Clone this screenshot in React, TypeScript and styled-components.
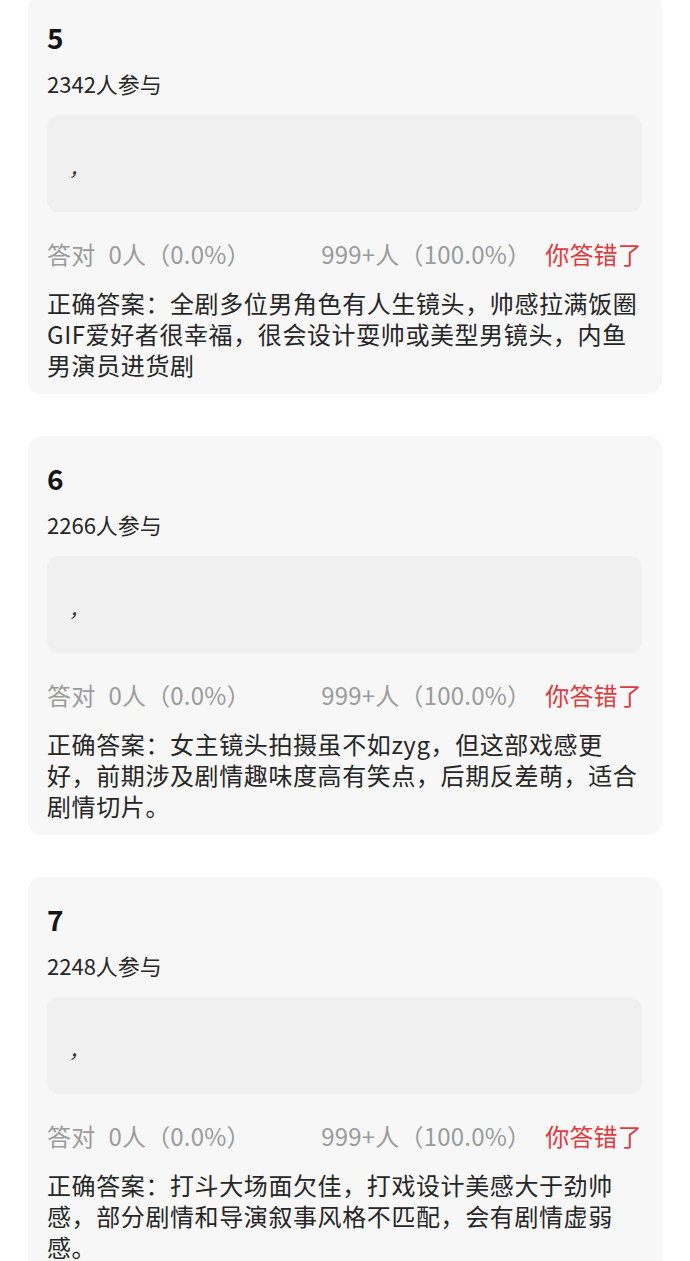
import React from "react";
import styled, { createGlobalStyle } from "styled-components";

const GlobalStyle = createGlobalStyle`
  html, body {
    margin: 0;
    padding: 0;
    background: #ffffff;
  }
  body {
    font-family: "Noto Sans CJK SC", "Noto Sans", sans-serif;
    overflow: hidden;
  }
`;

const Page = styled.div`
  display: flex;
  flex-direction: column;
  gap: 42px;
  padding: 0 28px;
  margin-top: -5px;
  height: 1266px;
  overflow: hidden;
`;

const Card = styled.section`
  flex: none;
  display: flex;
  flex-direction: column;
  background: #f7f7f7;
  border-radius: 14px;
  padding: 26px 20px 14px 19px;
`;

const QNumber = styled.div`
  font-size: 28px;
  font-weight: 700;
  line-height: 32px;
  color: #151515;
`;

const Participants = styled.div`
  margin-top: 16px;
  font-size: 22px;
  line-height: 28px;
  color: #262626;
`;

const OptionBox = styled.div`
  margin-top: 18px;
  height: 97px;
  border-radius: 12px;
  background: #f0f0f0;
  display: flex;
  align-items: center;
  padding-left: 24px;
  font-size: 22px;
  color: #333;
  font-style: italic;
`;

const Stats = styled.div`
  margin-top: 26px;
  display: flex;
  justify-content: space-between;
  align-items: center;
  font-size: 24px;
  line-height: 32px;
  letter-spacing: 0.2px;
  color: #9b9b9b;
  white-space: nowrap;
`;

const StatLeft = styled.div`
  display: flex;
  align-items: center;
  gap: 13px;
`;

const StatRight = styled.div`
  display: flex;
  align-items: center;
  gap: 14px;
`;

const Wrong = styled.span`
  color: #e23b3d;
`;

const Answer = styled.div`
  margin-top: 17px;
  font-size: 24px;
  line-height: 31px;
  letter-spacing: 0.6px;
  color: #262626;
`;

const Line = styled.span`
  display: block;
  white-space: nowrap;
`;

type Q = { n: number; people: number; lines: string[] };

const data: Q[] = [
  {
    n: 5,
    people: 2342,
    lines: [
      "正确答案：全剧多位男角色有人生镜头，帅感拉满饭圈",
      "GIF爱好者很幸福，很会设计耍帅或美型男镜头，内鱼",
      "男演员进货剧",
    ],
  },
  {
    n: 6,
    people: 2266,
    lines: [
      "正确答案：女主镜头拍摄虽不如zyg，但这部戏感更",
      "好，前期涉及剧情趣味度高有笑点，后期反差萌，适合",
      "剧情切片。",
    ],
  },
  {
    n: 7,
    people: 2248,
    lines: [
      "正确答案：打斗大场面欠佳，打戏设计美感大于劲帅",
      "感，部分剧情和导演叙事风格不匹配，会有剧情虚弱",
      "感。",
    ],
  },
];

export default function App() {
  return (
    <>
      <GlobalStyle />
      <Page>
        {data.map((q) => (
          <Card key={q.n}>
            <QNumber>{q.n}</QNumber>
            <Participants>{q.people}人参与</Participants>
            <OptionBox>,</OptionBox>
            <Stats>
              <StatLeft>
                <span>答对</span>
                <span>0人（0.0%）</span>
              </StatLeft>
              <StatRight>
                <span>999+人（100.0%）</span>
                <Wrong>你答错了</Wrong>
              </StatRight>
            </Stats>
            <Answer>
              {q.lines.map((l, i) => (
                <Line key={i}>{l}</Line>
              ))}
            </Answer>
          </Card>
        ))}
      </Page>
    </>
  );
}
